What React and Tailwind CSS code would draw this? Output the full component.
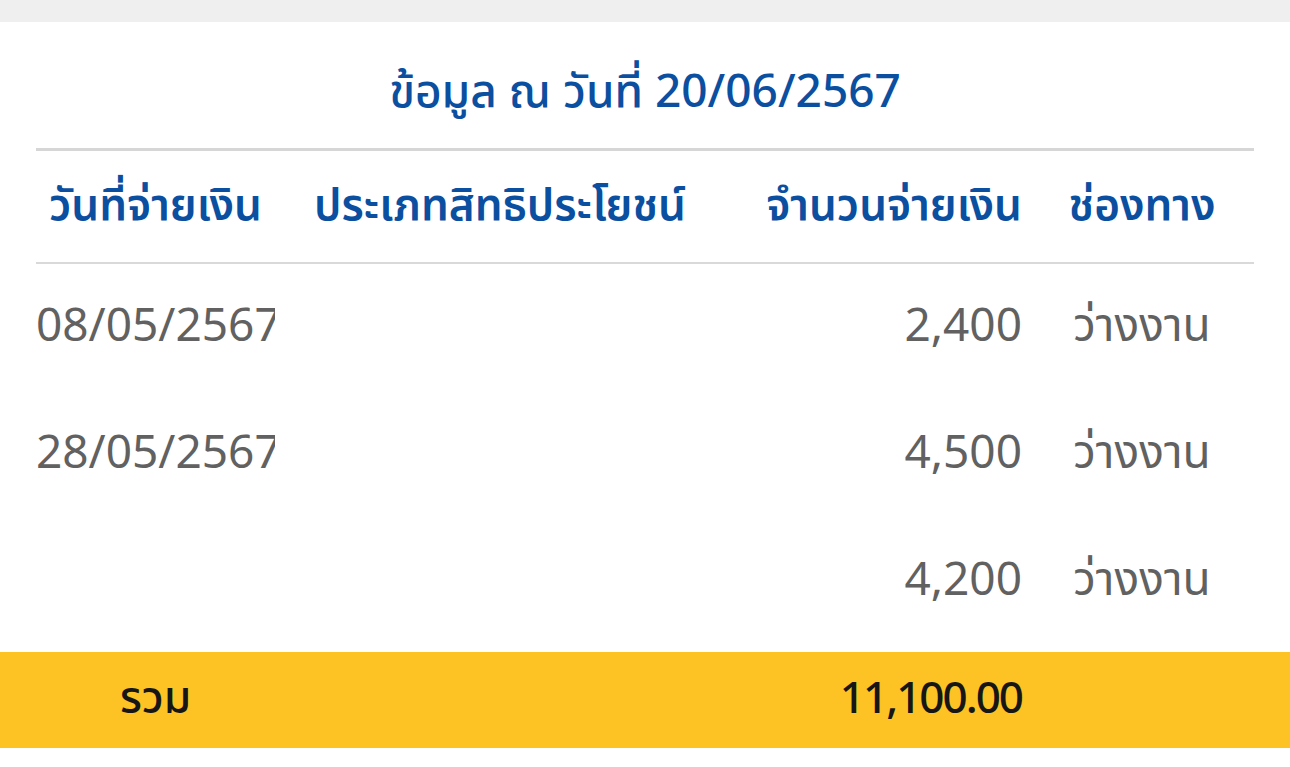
const rows = [
  { date: '08/05/2567', type: '', amount: '2,400', channel: 'ว่างงาน' },
  { date: '28/05/2567', type: '', amount: '4,500', channel: 'ว่างงาน' },
  { date: '', type: '', amount: '4,200', channel: 'ว่างงาน' },
]

const font = { fontFamily: '"Noto Sans Thai", "Noto Sans", "Open Sans", sans-serif' }

export default function App() {
  return (
    <div className="w-[1290px] h-[767px] bg-white overflow-hidden" style={font}>
      <div className="h-[22px] bg-[#efefef]" />
      <div className="pt-[44px] pb-[28px] text-center text-[46px] leading-[54px] font-medium text-[#0b4fa1]">
        ข้อมูล ณ วันที่ 20/06/2567
      </div>
      <div className="mx-[36px] h-[3px] bg-[#d6d6d6]" />
      <div className="pl-[36px] grid grid-cols-[239px_450px_297px_240px] h-[111px] items-center text-[44px] font-semibold text-[#0b4fa1]">
        <div className="text-center">วันที่จ่ายเงิน</div>
        <div className="text-center">ประเภทสิทธิประโยชน์</div>
        <div className="text-right">จำนวนจ่ายเงิน</div>
        <div className="text-center">ช่องทาง</div>
      </div>
      <div className="mx-[36px] h-[2px] bg-[#d9d9d9]" />
      {rows.map((r, i) => (
        <div key={i} className="pl-[36px] grid grid-cols-[239px_450px_297px_240px] h-[127px] items-center text-[46px] text-[#616161]">
          <div className="overflow-hidden whitespace-nowrap">{r.date}</div>
          <div className="text-center">{r.type}</div>
          <div className="text-right">{r.amount}</div>
          <div className="text-center">{r.channel}</div>
        </div>
      ))}
      <div className="mt-[7px] pl-[36px] grid grid-cols-[239px_450px_297px_240px] h-[96px] items-center bg-[#fdc223] text-[44px] font-medium text-[#161616]">
        <div className="text-center">รวม</div>
        <div />
        <div className="text-right tracking-[-2px]">11,100.00</div>
        <div />
      </div>
    </div>
  )
}
